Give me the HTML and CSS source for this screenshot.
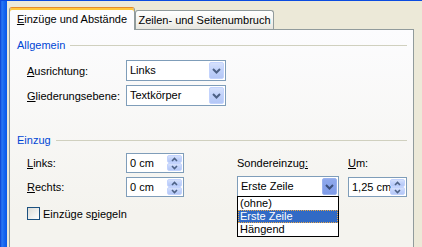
FILE: index.html
```html
<!DOCTYPE html>
<html lang="de">
<head>
    <meta charset="UTF-8">
    <title>Absatz</title>
    <link rel="stylesheet" href="styles.css">
</head>
<body>
    <div class="frame">
        <div class="frame-edge"></div>
        <div class="dialog">
            <div class="tabs">
                <div class="tab active"><u>E</u>inzüge und Abstände</div>
                <div class="tab">Zeilen- und Seitenumbruch</div>
            </div>

            <div class="panel">
                <div class="group-title">Allgemein</div>
                <div class="general">
                    <label><u>A</u>usrichtung:</label>
                    <div class="combo">
                        <span class="value">Links</span>
                        <span class="btn"><svg width="9" height="6" viewBox="0 0 9 6"><path d="M1 1l3.5 3.5L8 1" fill="none" stroke="#4D6185" stroke-width="2"/></svg></span>
                    </div>
                    <label><u>G</u>liederungsebene:</label>
                    <div class="combo">
                        <span class="value">Textkörper</span>
                        <span class="btn"><svg width="9" height="6" viewBox="0 0 9 6"><path d="M1 1l3.5 3.5L8 1" fill="none" stroke="#4D6185" stroke-width="2"/></svg></span>
                    </div>
                </div>

                <div class="group-title indent-title">Einzug</div>
                <div class="indent">
                    <label class="col-label"><u>L</u>inks:</label>
                    <div class="spin col-spin">
                        <span class="value">0 cm</span>
                        <span class="spin-btns">
                            <span class="btn"><svg width="7" height="5" viewBox="0 0 7 5"><path d="M1 4l2.5-2.5L6 4" fill="none" stroke="#4D6185" stroke-width="1.6"/></svg></span>
                            <span class="btn"><svg width="7" height="5" viewBox="0 0 7 5"><path d="M1 1l2.5 2.5L6 1" fill="none" stroke="#4D6185" stroke-width="1.6"/></svg></span>
                        </span>
                    </div>
                    <label class="col-special">Sondereinzug<u>:</u></label>
                    <label class="col-by"><u>U</u>m:</label>

                    <label class="col-label"><u>R</u>echts:</label>
                    <div class="spin col-spin">
                        <span class="value">0 cm</span>
                        <span class="spin-btns">
                            <span class="btn"><svg width="7" height="5" viewBox="0 0 7 5"><path d="M1 4l2.5-2.5L6 4" fill="none" stroke="#4D6185" stroke-width="1.6"/></svg></span>
                            <span class="btn"><svg width="7" height="5" viewBox="0 0 7 5"><path d="M1 1l2.5 2.5L6 1" fill="none" stroke="#4D6185" stroke-width="1.6"/></svg></span>
                        </span>
                    </div>
                    <div class="combo open col-special">
                        <span class="value">Erste Zeile</span>
                        <span class="btn pressed"><svg width="9" height="6" viewBox="0 0 9 6"><path d="M1 1l3.5 3.5L8 1" fill="none" stroke="#3B4F7A" stroke-width="2"/></svg></span>
                        <ul class="dropdown">
                            <li>(ohne)</li>
                            <li class="selected">Erste Zeile</li>
                            <li>Hängend</li>
                        </ul>
                    </div>
                    <div class="spin col-by">
                        <span class="value">1,25 cm</span>
                        <span class="spin-btns">
                            <span class="btn"><svg width="7" height="5" viewBox="0 0 7 5"><path d="M1 4l2.5-2.5L6 4" fill="none" stroke="#4D6185" stroke-width="1.6"/></svg></span>
                            <span class="btn"><svg width="7" height="5" viewBox="0 0 7 5"><path d="M1 1l2.5 2.5L6 1" fill="none" stroke="#4D6185" stroke-width="1.6"/></svg></span>
                        </span>
                    </div>
                </div>

                <div class="check-row">
                    <span class="checkbox"></span>
                    <span>Einzüge s<u>p</u>iegeln</span>
                </div>

                <div class="group-title spacing-title">Abstand</div>
            </div>
        </div>
    </div>
</body>
</html>
```

FILE: styles.css
```css
* {
    box-sizing: border-box;
}

body {
    margin: 0;
    width: 422px;
    height: 247px;
    overflow: hidden;
    background-color: #ECE9D8;
    color: #000;
    font-family: "Liberation Sans", Arial, sans-serif;
    font-size: 11px;
}

u {
    text-decoration: underline;
    text-underline-offset: 1px;
}

.frame {
    display: flex;
    height: 247px;
    border-top: 1px solid #0B4BE0;
}

.frame-edge {
    width: 7px;
    background: linear-gradient(to right, #0A3FD0 0, #2A78F5 2px, #1868F0 4px, #0B58E8 7px);
}

.dialog {
    flex: 1;
    display: flex;
    flex-direction: column;
    padding: 6px 8px 0 2px;
    min-width: 0;
}

/* Tabs */
.tabs {
    display: flex;
    align-items: flex-start;
    height: 23px;
}

.tab {
    width: 139px;
    height: 19px;
    margin-top: 3px;
    line-height: 18px;
    text-align: center;
    white-space: nowrap;
    border: 1px solid #919B9C;
    border-bottom: none;
    border-radius: 3px 3px 0 0;
    background: linear-gradient(#FFFFFF, #F3F3EF 60%, #E6E5DE);
}

.tab.active {
    position: relative;
    z-index: 1;
    width: 126px;
    height: 23px;
    margin-top: 0;
    line-height: 22px;
    border-top: 1px solid #E68B2C;
    background: #FCFCFE;
    box-shadow: inset 0 2px 0 #FFC83C;
}

/* Panel */
.panel {
    flex: 1;
    margin-top: -1px;
    padding: 9px 6px 0 7px;
    border: 1px solid #919B9C;
    border-bottom: none;
    background: linear-gradient(#FCFCFE, #F4F3EE 80%);
}

.group-title {
    display: flex;
    align-items: center;
    height: 13px;
    line-height: 13px;
    color: #0046D5;
}

.group-title::after {
    content: "";
    flex: 1;
    height: 1px;
    margin-left: 5px;
    background-color: #D0D0BF;
}

.indent-title {
    margin-top: 28px;
}

.spacing-title {
    margin-top: 25px;
    padding-left: 8px;
}

.general {
    display: grid;
    grid-template-columns: 99px 100px;
    grid-auto-rows: 21px;
    row-gap: 4px;
    align-items: center;
    margin: 8px 0 0 10px;
}

.indent {
    display: grid;
    grid-template-columns: 99px 58px 53px 102px 9px 59px;
    grid-auto-rows: 20px;
    row-gap: 4px;
    align-items: center;
    margin: 6px 0 0 10px;
}

.col-label { grid-column: 1; }
.col-spin { grid-column: 2; }
.col-special { grid-column: 4; }
.col-by { grid-column: 6; }

/* Combo and spin fields */
.combo,
.spin {
    display: flex;
    height: 21px;
    background-color: #FFFFFF;
    border: 1px solid #7F9DB9;
}

.spin {
    height: 20px;
}

.value {
    flex: 1;
    min-width: 0;
    padding-left: 3px;
    line-height: 18px;
    white-space: nowrap;
}

.combo .btn {
    width: 15px;
    margin: 1px;
}

.btn {
    display: flex;
    align-items: center;
    justify-content: center;
    border: 1px solid #C3D3FD;
    border-radius: 2px;
    background: linear-gradient(#D6E1FC, #C0D1FA 50%, #B4C7F6);
}

.btn.pressed {
    border-color: #9AB2EE;
    background: linear-gradient(#8FA9EC, #7E9BE8);
}

.spin-btns {
    display: flex;
    flex-direction: column;
    flex: none;
    width: 15px;
    margin: 1px;
}

.spin-btns .btn {
    flex: 1;
}

.combo.open {
    position: relative;
    align-self: start;
    margin-top: -1px;
}

.dropdown {
    position: absolute;
    top: 100%;
    left: -1px;
    width: 102px;
    margin: 0;
    padding: 0;
    list-style: none;
    background-color: #FFFFFF;
    border: 1px solid #000000;
    z-index: 2;
}

.dropdown li {
    height: 13px;
    line-height: 13px;
    padding-left: 2px;
}

.dropdown li.selected {
    background-color: #316AC5;
    color: #FFFFFF;
    outline: 1px dotted #E8A84B;
    outline-offset: -1px;
}

/* Checkbox */
.check-row {
    display: flex;
    align-items: center;
    gap: 3px;
    margin: 10px 0 0 10px;
    height: 13px;
}

.checkbox {
    width: 13px;
    height: 13px;
    border: 1px solid #1C5180;
    background: linear-gradient(135deg, #DCDCD7, #FFFFFF);
}
```
